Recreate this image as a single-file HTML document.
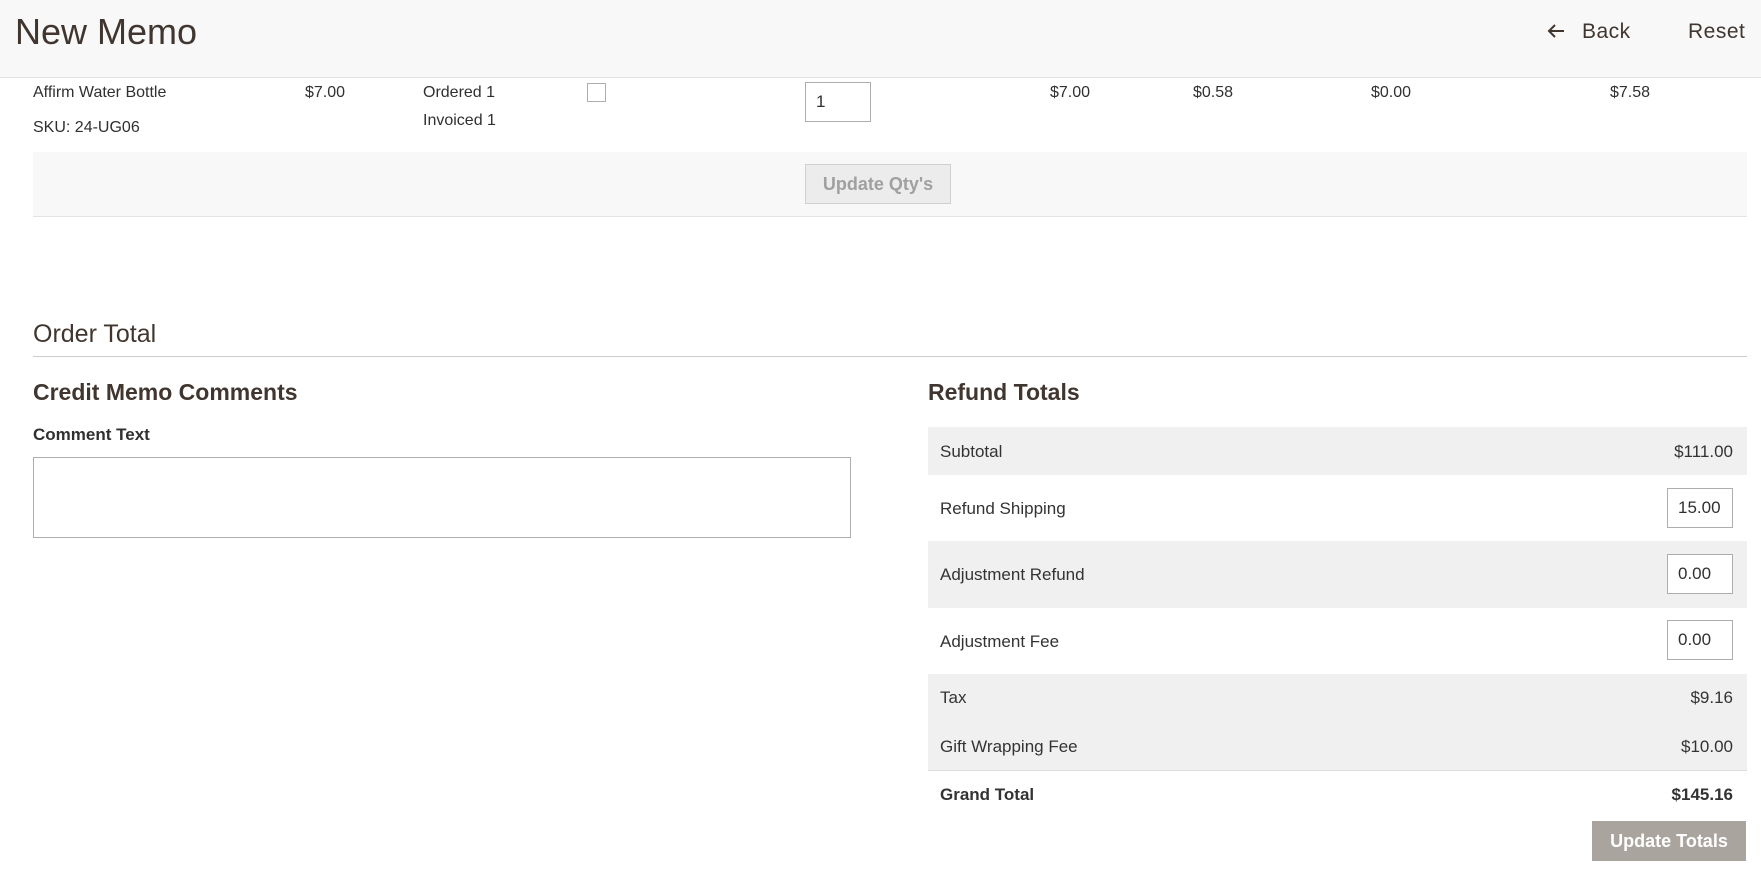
<!DOCTYPE html>
<html><head><meta charset="utf-8"><style>
*{box-sizing:border-box;margin:0;padding:0}
body{width:1761px;height:882px;overflow:hidden;background:#fff;font-family:"Liberation Sans",sans-serif;color:#303030;font-size:16px;position:relative}
.a{position:absolute;white-space:nowrap}
.hdr{position:absolute;left:0;top:0;width:1761px;height:78px;background:#f8f8f8;border-bottom:1px solid #e3e3e3}
.inp{position:absolute;border:1px solid #adadad;background:#fff;font-size:16px;padding:0 10px;display:flex;align-items:center;overflow:hidden}
.row{position:absolute;left:928px;width:819px}
.g{background:#f0f0f0}
.lbl{position:absolute;left:12px;font-size:17px;color:#333}
.val{position:absolute;right:14px;font-size:17px;color:#333}
</style></head><body>
<div class="hdr"></div>
<div class="a" style="left:15px;top:11px;font-size:36px;color:#41362f">New Memo</div>
<svg class="a" style="left:1547px;top:23px" width="18" height="16" viewBox="0 0 18 16"><path d="M17 8H2M8 2L2 8l6 6" stroke="#41362f" stroke-width="2" fill="none"/></svg>
<div class="a" style="left:1582px;top:20px;font-size:21px;color:#41362f;letter-spacing:0.5px">Back</div>
<div class="a" style="left:1688px;top:20px;font-size:21px;color:#41362f;letter-spacing:0.5px">Reset</div>

<div class="a" style="left:33px;top:84px;font-size:16px">Affirm Water Bottle</div>
<div class="a" style="left:33px;top:119px;font-size:16px">SKU: 24-UG06</div>
<div class="a" style="left:305px;top:84px;font-size:16px">$7.00</div>
<div class="a" style="left:423px;top:84px;font-size:16px">Ordered&nbsp;1</div>
<div class="a" style="left:423px;top:112px;font-size:16px">Invoiced&nbsp;1</div>
<div class="a" style="left:587px;top:83px;width:19px;height:19px;border:1px solid #adadad"></div>
<div class="inp" style="left:805px;top:82px;width:66px;height:40px;font-size:17px">1</div>
<div class="a" style="left:1050px;top:84px">$7.00</div>
<div class="a" style="left:1193px;top:84px">$0.58</div>
<div class="a" style="left:1371px;top:84px">$0.00</div>
<div class="a" style="left:1610px;top:84px">$7.58</div>
<div class="a" style="left:33px;top:152px;width:1714px;height:65px;background:#f8f8f8;border-bottom:1px solid #e3e3e3"></div>
<div class="a" style="left:805px;top:164px;width:146px;height:40px;background:#ececec;border:1px solid #d0d0d0;color:#a0a0a0;font-size:18px;font-weight:bold;display:flex;align-items:center;justify-content:center">Update Qty's</div>

<div class="a" style="left:33px;top:320px;font-size:25px;color:#41362f">Order Total</div>
<div class="a" style="left:33px;top:356px;width:1714px;height:1px;background:#ccc"></div>
<div class="a" style="left:33px;top:379px;font-size:23px;font-weight:bold;color:#41362f">Credit Memo Comments</div>
<div class="a" style="left:33px;top:425px;font-size:17px;font-weight:bold">Comment Text</div>
<div class="a" style="left:33px;top:457px;width:818px;height:81px;border:1px solid #adadad"></div>
<div class="a" style="left:928px;top:379px;font-size:23px;font-weight:bold;color:#41362f">Refund Totals</div>

<div class="row g" style="top:427px;height:48px"><span class="lbl" style="top:15px">Subtotal</span><span class="val" style="top:15px">$111.00</span></div>
<div class="row" style="top:475px;height:66px"><span class="lbl" style="top:24px">Refund Shipping</span></div>
<div class="inp" style="left:1667px;top:488px;width:66px;height:40px;font-size:17px">15.00</div>
<div class="row g" style="top:541px;height:67px"><span class="lbl" style="top:24px">Adjustment Refund</span></div>
<div class="inp" style="left:1667px;top:554px;width:66px;height:40px;font-size:17px">0.00</div>
<div class="row" style="top:608px;height:66px"><span class="lbl" style="top:24px">Adjustment Fee</span></div>
<div class="inp" style="left:1667px;top:620px;width:66px;height:40px;font-size:17px">0.00</div>
<div class="row g" style="top:674px;height:97px;border-bottom:1px solid #ddd"><span class="lbl" style="top:14px">Tax</span><span class="val" style="top:14px">$9.16</span><span class="lbl" style="top:63px">Gift Wrapping Fee</span><span class="val" style="top:63px">$10.00</span></div>
<div class="row" style="top:771px;height:48px"><span class="lbl" style="top:14px;font-weight:bold">Grand Total</span><span class="val" style="top:14px;font-weight:bold">$145.16</span></div>
<div class="a" style="left:1592px;top:821px;width:154px;height:40px;background:#aaa49f;color:#fff;font-size:18px;font-weight:bold;display:flex;align-items:center;justify-content:center">Update Totals</div>
</body></html>
